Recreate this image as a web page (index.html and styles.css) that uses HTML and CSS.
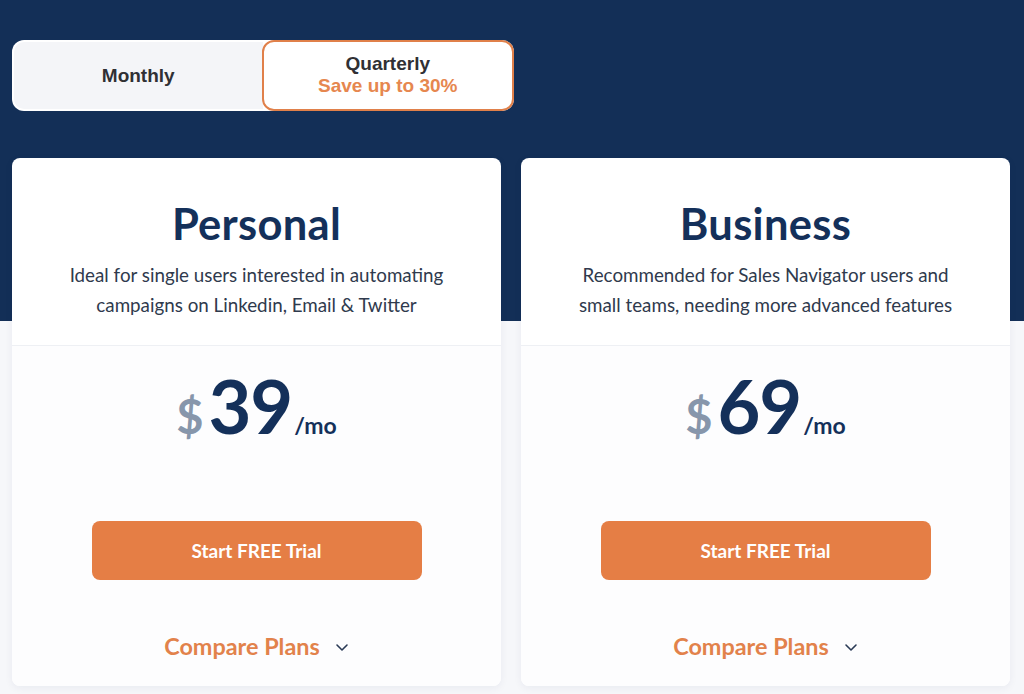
FILE: index.html
```html
<!DOCTYPE html>
<html>
<head>
<meta charset="utf-8">
<link rel="stylesheet" href="styles.css">
</head>
<body>
<div class="hero"></div>
<main class="page">
  <div class="toggle">
    <div class="opt monthly">Monthly</div>
    <div class="opt quarterly"><span class="q">Quarterly</span><span class="save">Save up to 30%</span></div>
  </div>
  <div class="cards">
    <section class="card">
      <div class="head">
        <h2>Personal</h2>
        <p>Ideal for single users interested in automating<br>campaigns on Linkedin, Email &amp; Twitter</p>
      </div>
      <div class="body">
        <div class="price"><span class="cur">$</span><span class="amt">39</span><span class="per">/mo</span></div>
        <button class="cta">Start FREE Trial</button>
        <div class="compare">Compare Plans <svg class="chev" width="14" height="9" viewBox="0 0 14 9"><path d="M2 2l5 5 5-5" fill="none" stroke="#2a3a55" stroke-width="1.6" stroke-linecap="round" stroke-linejoin="round"/></svg></div>
      </div>
    </section>
    <section class="card">
      <div class="head">
        <h2>Business</h2>
        <p>Recommended for Sales Navigator users and<br>small teams, needing more advanced features</p>
      </div>
      <div class="body">
        <div class="price"><span class="cur">$</span><span class="amt">69</span><span class="per">/mo</span></div>
        <button class="cta">Start FREE Trial</button>
        <div class="compare">Compare Plans <svg class="chev" width="14" height="9" viewBox="0 0 14 9"><path d="M2 2l5 5 5-5" fill="none" stroke="#2a3a55" stroke-width="1.6" stroke-linecap="round" stroke-linejoin="round"/></svg></div>
      </div>
    </section>
  </div>
</main>
</body>
</html>
```

FILE: styles.css
```css
* { box-sizing: border-box; }
html, body { margin: 0; padding: 0; }
body {
  width: 1024px;
  height: 694px;
  overflow: hidden;
  background: #f6f7fa;
  font-family: Lato, "Liberation Sans", sans-serif;
  position: relative;
}
.hero {
  position: absolute;
  left: 0; top: 0;
  width: 1024px;
  height: 321px;
  background: #132f57;
}
.page {
  position: relative;
  padding: 40px 14px 0 12px;
}
.toggle {
  width: 502px;
  height: 71px;
  background: #fff;
  border-radius: 12px;
  display: flex;
  padding: 2px 0 2px 2px;
}
.opt {
  flex: 1;
  display: flex;
  flex-direction: column;
  align-items: center;
  justify-content: center;
  font-family: "Liberation Sans", Arial, sans-serif;
}
.monthly {
  background: #f4f5f8;
  border-radius: 10px 0 0 10px;
  font-size: 19px;
  font-weight: 700;
  color: #303034;
  margin-right: -1px;
  padding-top: 1px;
}
.quarterly {
  margin: -2px 0;
  border: 2px solid #e0804a;
  border-radius: 12px;
  background: #fff;
  padding-bottom: 1px;
}
.q, .save { display: block; font-size: 19px; font-weight: 700; line-height: 21.6px; }
.q { color: #303034; }
.save { color: #e6874f; }
.cards {
  display: flex;
  gap: 20px;
  margin-top: 47px;
}
.card {
  width: 489px;
  height: 528px;
  background: #fff;
  border-radius: 8px;
  box-shadow: 0 2px 8px rgba(20, 40, 80, 0.06);
  display: flex;
  flex-direction: column;
}
.head {
  height: 188px;
  border-bottom: 1px solid #eef0f4;
  text-align: center;
  padding-top: 40px;
}
h2 {
  margin: 0;
  font-size: 43.5px;
  font-weight: 700;
  color: #14305a;
  line-height: 50px;
  letter-spacing: 0.3px;
}
.head p {
  margin: 12px 0 0;
  font-size: 18.8px;
  line-height: 30px;
  color: #2f3a4d;
}
.body {
  display: flex;
  flex-direction: column;
  align-items: center;
  background: #fdfdfe;
  flex: 1;
  border-radius: 0 0 8px 8px;
}
.price {
  display: flex;
  align-items: baseline;
  margin-top: 21px;
  height: 78px;
  margin-left: 0;
}
.cur { font-size: 47px; font-weight: 700; color: #8796ab; margin-right: 5px; }
.amt { font-size: 74px; font-weight: 700; color: #14305a; letter-spacing: -1px; line-height: 78px; }
.per { font-size: 23px; font-weight: 700; color: #14305a; margin-left: 2px; }
.cta {
  margin-top: 76px;
  width: 330px;
  height: 59px;
  border: 0;
  border-radius: 8px;
  background: #e57e45;
  color: #fff;
  font-family: Lato, sans-serif;
  font-size: 19px;
  font-weight: 700;
}
.compare {
  margin-top: 52px;
  margin-left: 0;
  font-size: 23.4px;
  font-weight: 700;
  color: #e2824b;
  display: flex;
  align-items: center;
  gap: 15px;
}
.chev { margin-top: 2px; }
```
